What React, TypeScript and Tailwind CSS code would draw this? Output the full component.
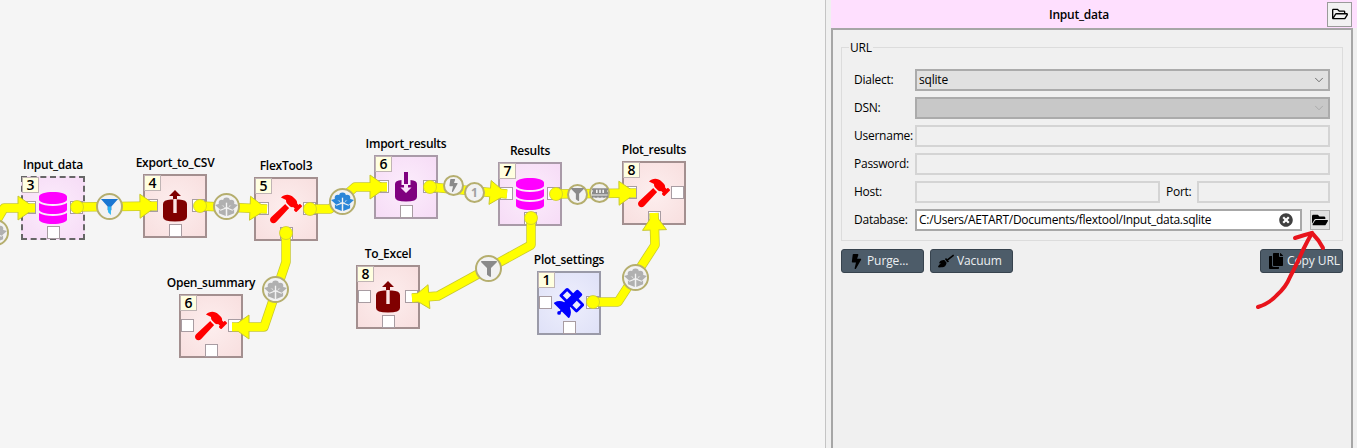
import type { ReactNode } from 'react';
import { ChevronDown } from 'lucide-react';
import {
  FaBolt,
  FaBroom,
  FaCopy,
  FaDatabase,
  FaFilter,
  FaFolderOpen,
  FaHammer,
  FaMemory,
  FaRegFolderOpen,
  FaSatellite,
  FaTimesCircle,
} from 'react-icons/fa';

const font = "font-['Open_Sans','Noto_Sans',sans-serif]";

type Pt = [number, number];

// link polylines on the design canvas, last point is the arrow tip
const links: { points: Pt[]; dot?: boolean }[] = [
  { points: [[-10, 232], [4, 208], [35, 208]] },
  { points: [[77, 207], [157, 206]], dot: true },
  { points: [[200, 206], [267, 209]], dot: true },
  { points: [[310, 209], [330, 209], [355, 187], [387, 187]], dot: true },
  { points: [[430, 187], [507, 194]], dot: true },
  { points: [[556, 194], [636, 193]], dot: true },
  { points: [[531, 218], [531, 245], [438, 296], [412, 298]], dot: true },
  { points: [[593, 302], [618, 302], [655, 245], [654, 213]], dot: true },
  { points: [[286, 233], [286, 262], [264, 327], [232, 327]], dot: true },
];

function arrowHead(points: Pt[]) {
  const [tx, ty] = points[points.length - 1];
  const [px, py] = points[points.length - 2];
  const len = Math.hypot(tx - px, ty - py);
  const ux = (tx - px) / len;
  const uy = (ty - py) / len;
  const bx = tx - ux * 17;
  const by = ty - uy * 17;
  return `${tx},${ty} ${bx - uy * 12},${by + ux * 12} ${bx + uy * 12},${by - ux * 12}`;
}

function Links() {
  return (
    <svg className="absolute inset-0 z-10" width="825" height="448" viewBox="0 0 825 448">
      {links.map((l, i) => {
        const pts = l.points.map((p) => p.join(',')).join(' ');
        return (
          <g key={i}>
            <polyline points={pts} fill="none" stroke="#c8c830" strokeWidth="9.5" strokeLinejoin="round" />
            <polygon points={arrowHead(l.points)} fill="#ffff00" stroke="#c8c830" strokeWidth="1" />
            <polyline points={pts} fill="none" stroke="#ffff00" strokeWidth="8" strokeLinejoin="round" />
            {l.dot && <circle cx={l.points[0][0]} cy={l.points[0][1]} r="6.5" fill="#ffff00" stroke="#c8c830" strokeWidth="0.75" />}
          </g>
        );
      })}
    </svg>
  );
}

// open box with a tree growing out of it
function BoxTree({ color }: { color: string }) {
  return (
    <svg width="23" height="19" viewBox="0 0 24 20" fill={color}>
      <circle cx="12" cy="4" r="3.6" />
      <circle cx="7" cy="6" r="3.2" />
      <circle cx="17" cy="6" r="3.2" />
      <circle cx="12" cy="7.5" r="3.5" />
      <rect x="11.3" y="6" width="1.4" height="6" fill="#f4f4f4" />
      <path d="M0 8.5 L4.5 7 L10.4 11.2 L5.5 13.4 Z" />
      <path d="M24 8.5 L19.5 7 L13.6 11.2 L18.5 13.4 Z" />
      <path d="M4 13 L5.8 14.6 L11.2 12.4 V20 L4 17.2 Z" />
      <path d="M20 13 L18.2 14.6 L12.8 12.4 V20 L20 17.2 Z" />
    </svg>
  );
}

function ExportIcon() {
  return (
    <svg width="24" height="32" viewBox="0 0 24 32">
      <path d="M0 14 Q0 10 8 9.6 H16 Q24 10 24 14 V27 Q24 31.5 12 31.5 Q0 31.5 0 27 Z" fill="#800000" />
      <path d="M12 0 L18 6 H14 V10 H10 V6 H6 Z" fill="#800000" />
      <rect x="10.3" y="9" width="3.4" height="14" fill="#fbe4e4" />
    </svg>
  );
}

function ImportIcon() {
  return (
    <svg width="22" height="30" viewBox="0 0 22 30">
      <path d="M0 12 Q0 8.5 6.5 8 V13 H15.5 V8 Q22 8.5 22 12 V25 Q22 29.5 11 29.5 Q0 29.5 0 25 Z" fill="#800080" />
      <rect x="9" y="0" width="4" height="12" fill="#800080" />
      <path d="M9 12 H13 V15.5 H16.5 L11 21 L5.5 15.5 H9 Z" fill="#f9e2f9" />
    </svg>
  );
}

function Node({
  pos,
  title,
  rank,
  tint,
  children,
}: {
  pos: string;
  title: string;
  rank: number;
  tint: string;
  children: ReactNode;
}) {
  return (
    <div className={`absolute h-[64px] w-[64px] box-border flex items-center justify-center ${pos} ${tint}`}>
      <span className="absolute bottom-full left-1/2 mb-[5px] -translate-x-1/2 whitespace-nowrap text-[12px] leading-4 font-semibold tracking-[-0.25px] text-black">
        {title}
      </span>
      <span className="absolute left-[-1px] top-[-1px] flex h-[16px] w-[17px] items-center justify-center border border-[#c0b4b4] bg-[#ffffe0] text-[14px] font-semibold leading-none text-black">
        {rank}
      </span>
      <span className="absolute left-0 top-[23px] h-[13px] w-[13px] border border-[#a89ca2] bg-white" />
      <span className="absolute right-0 top-[23px] h-[13px] w-[13px] border border-[#a89ca2] bg-white" />
      <span className="absolute bottom-[-1px] left-[24px] h-[13px] w-[13px] border border-[#a89ca2] bg-white" />
      {children}
    </div>
  );
}

const pink = 'border-2 border-[#a99aa8] bg-[radial-gradient(circle,#fcedfc,#f6dcf6)]';
const red = 'border-2 border-[#a38f8f] bg-[radial-gradient(circle,#fdeeee,#f8dfdf)]';
const blue = 'border-2 border-[#9a9aa8] bg-[radial-gradient(circle,#eeeffd,#dfe1f7)]';

function Bubble({ pos, small, children }: { pos: string; small?: boolean; children: ReactNode }) {
  return (
    <div
      className={`absolute z-20 flex items-center justify-center rounded-full border-2 border-[#b5ae6e] bg-[#f2f2f2] ${
        small ? 'h-[21px] w-[21px]' : 'h-[27px] w-[27px]'
      } ${pos}`}
    >
      {children}
    </div>
  );
}

function Canvas() {
  return (
    <div className="relative h-full w-[825px] shrink-0 overflow-hidden bg-[#f5f5f5]">
      <Node pos="left-[21px] top-[176px] !border-dashed !border-[#666]" title="Input_data" rank={3} tint={pink}>
        <FaDatabase size={32} color="#ff00ff" />
      </Node>
      <Node pos="left-[143px] top-[174px]" title="Export_to_CSV" rank={4} tint={red}>
        <ExportIcon />
      </Node>
      <Node pos="left-[254px] top-[177px]" title="FlexTool3" rank={5} tint={red}>
        <FaHammer size={32} color="#ff0000" />
      </Node>
      <Node pos="left-[179px] top-[294px]" title="Open_summary" rank={6} tint={red}>
        <FaHammer size={32} color="#ff0000" />
      </Node>
      <Node pos="left-[374px] top-[155px]" title="Import_results" rank={6} tint={pink}>
        <ImportIcon />
      </Node>
      <Node pos="left-[498px] top-[162px]" title="Results" rank={7} tint={pink}>
        <FaDatabase size={32} color="#ff00ff" />
      </Node>
      <Node pos="left-[622px] top-[161px]" title="Plot_results" rank={8} tint={red}>
        <FaHammer size={32} color="#ff0000" />
      </Node>
      <Node pos="left-[356px] top-[265px]" title="To_Excel" rank={8} tint={red}>
        <ExportIcon />
      </Node>
      <Node pos="left-[537px] top-[271px]" title="Plot_settings" rank={1} tint={blue}>
        <FaSatellite size={30} color="#0000ff" />
      </Node>

      <Links />

      <Bubble pos="left-[-18px] top-[219px]">
        <BoxTree color="#b0b0b0" />
      </Bubble>
      <Bubble pos="left-[96px] top-[193px]">
        <svg width="19" height="19" viewBox="0 0 20 20">
          <path d="M1 2 H19 L12 10 V14 H8 V10 Z" fill="#1976d2" />
          <path d="M8.5 10 H11.5 V19 L8.5 16 Z" fill="#29b6f6" />
        </svg>
      </Bubble>
      <Bubble pos="left-[213px] top-[193px]">
        <BoxTree color="#b0b0b0" />
      </Bubble>
      <Bubble pos="left-[329px] top-[188px]">
        <BoxTree color="#2a86d8" />
      </Bubble>
      <Bubble pos="left-[262px] top-[276px]">
        <BoxTree color="#b0b0b0" />
      </Bubble>
      <Bubble pos="left-[443px] top-[175px]" small>
        <FaBolt size={13} color="#8a8a8a" />
      </Bubble>
      <Bubble pos="left-[464px] top-[182px]" small>
        <span className="text-[12px] font-bold leading-none text-[#a0a0a0]">1</span>
      </Bubble>
      <Bubble pos="left-[567px] top-[184px]" small>
        <FaFilter size={13} color="#8a8a8a" />
      </Bubble>
      <Bubble pos="left-[589px] top-[182px]" small>
        <FaMemory size={16} color="#8a8a8a" />
      </Bubble>
      <Bubble pos="left-[475px] top-[255px]">
        <FaFilter size={16} color="#8a8a8a" />
      </Bubble>
      <Bubble pos="left-[622px] top-[264px]">
        <BoxTree color="#b0b0b0" />
      </Bubble>
    </div>
  );
}

function Field({ disabled, children, className }: { disabled?: boolean; children?: ReactNode; className: string }) {
  return (
    <div
      className={`flex h-[22px] items-center border-2 pl-[2px] pr-[3px] text-[12px] ${
        disabled ? 'border-[#d4d4d4] bg-[#f0f0f0]' : 'border-[#a8a8a8] bg-white'
      } ${className}`}
    >
      {children}
    </div>
  );
}

function Combo({ value, disabled }: { value?: string; disabled?: boolean }) {
  return (
    <div
      className={`flex h-[22px] flex-1 items-center justify-between border-2 border-[#ababab] pl-[2px] pr-[2px] text-[12px] tracking-[-0.2px] text-black ${
        disabled ? 'bg-[#c8c8c8]' : 'bg-[#e1e1e1]'
      }`}
    >
      <span>{value}</span>
      <ChevronDown size={14} strokeWidth={1.25} color={disabled ? '#a0a0a0' : '#444'} />
    </div>
  );
}

function Row({ label, children }: { label: string; children: ReactNode }) {
  return (
    <div className="flex h-[22px] items-center">
      <span className="w-[61px] shrink-0 text-[12px] tracking-[-0.25px] text-black">{label}</span>
      {children}
    </div>
  );
}

function ToolButton({ icon, label, className }: { icon: ReactNode; label: string; className: string }) {
  return (
    <div
      className={`flex h-[24px] w-[83px] items-center gap-[3px] rounded-[3px] border border-[#37434e] bg-[#4d5c69] pl-[7px] text-[12px] tracking-[-0.1px] text-[#eceff1] ${className}`}
    >
      {icon}
      <span>{label}</span>
    </div>
  );
}

function Panel() {
  return (
    <div className="flex h-full min-w-0 flex-1 flex-col bg-[#f0f0f0] pl-[5px]">
      <div className="flex h-[28px] shrink-0 items-center bg-[#fedffe] pr-[5px]">
        <span className="flex-1 pt-[2px] text-center text-[12px] font-semibold tracking-[-0.25px] text-black">Input_data</span>
        <div className="flex h-[25px] w-[25px] shrink-0 items-center justify-center border border-[#9a9a9a] bg-[#f2f2f2]">
          <FaRegFolderOpen size={16} color="#000" />
        </div>
      </div>
      <div className="mr-[4px] flex flex-1 flex-col border-x-2 border-t-2 border-[#a6a6a6] px-[8px] pt-[17px]">
        <div className="relative border border-[#dcdcdc] px-[12px] pb-[9px] pt-[21px]">
          <span className="absolute left-[7px] top-[-8px] bg-[#f0f0f0] px-[1px] text-[12px] leading-4 tracking-[-0.25px] text-black">URL</span>
          <div className="flex flex-col gap-[6px]">
            <Row label="Dialect:">
              <Combo value="sqlite" />
            </Row>
            <Row label="DSN:">
              <Combo disabled />
            </Row>
            <Row label="Username:">
              <Field disabled className="flex-1" />
            </Row>
            <Row label="Password:">
              <Field disabled className="flex-1" />
            </Row>
            <Row label="Host:">
              <Field disabled className="flex-1" />
              <span className="ml-[6px] w-[31px] shrink-0 text-[12px] tracking-[-0.25px] text-black">Port:</span>
              <Field disabled className="w-[133px]" />
            </Row>
            <Row label="Database:">
              <Field className="flex-1 justify-between tracking-[-0.27px] text-black">
                <span className="whitespace-nowrap">C:/Users/AETART/Documents/flextool/Input_data.sqlite</span>
                <FaTimesCircle size={14} color="#404040" className="mr-[4px]" />
              </Field>
              <div className="ml-[8px] flex h-[20px] w-[20px] shrink-0 items-center justify-center border border-[#b0b0b0] bg-[#e1e1e1]">
                <FaFolderOpen size={16} color="#000" />
              </div>
            </Row>
          </div>
        </div>
        <div className="mt-[8px] flex items-center gap-[6px]">
          <ToolButton icon={<FaBolt size={15} color="#000" />} label="Purge..." className="" />
          <ToolButton icon={<FaBroom size={16} color="#000" />} label="Vacuum" className="" />
          <ToolButton icon={<FaCopy size={16} color="#000" />} label="Copy URL" className="ml-auto" />
        </div>
      </div>
    </div>
  );
}

export default function App() {
  return (
    <div className={`relative flex h-[448px] w-[1357px] overflow-hidden bg-[#f0f0f0] ${font}`}>
      <Canvas />
      <div className="h-full w-px shrink-0 bg-[#c4c4c4]" />
      <Panel />
      {/* red hand drawn note on top of the screenshot */}
      <svg className="pointer-events-none absolute inset-0 z-30" width="1357" height="448" viewBox="0 0 1357 448">
        <path
          d="M1258 307 Q1270 303 1277 295 Q1286 287 1290 277 Q1297 264 1303 250 Q1308 240 1312 233"
          fill="none"
          stroke="#e8141c"
          strokeWidth="4"
          strokeLinecap="round"
        />
        <path d="M1295 238 Q1304 235 1312 233 Q1319 240 1323 248" fill="none" stroke="#e8141c" strokeWidth="4" strokeLinecap="round" />
      </svg>
    </div>
  );
}
